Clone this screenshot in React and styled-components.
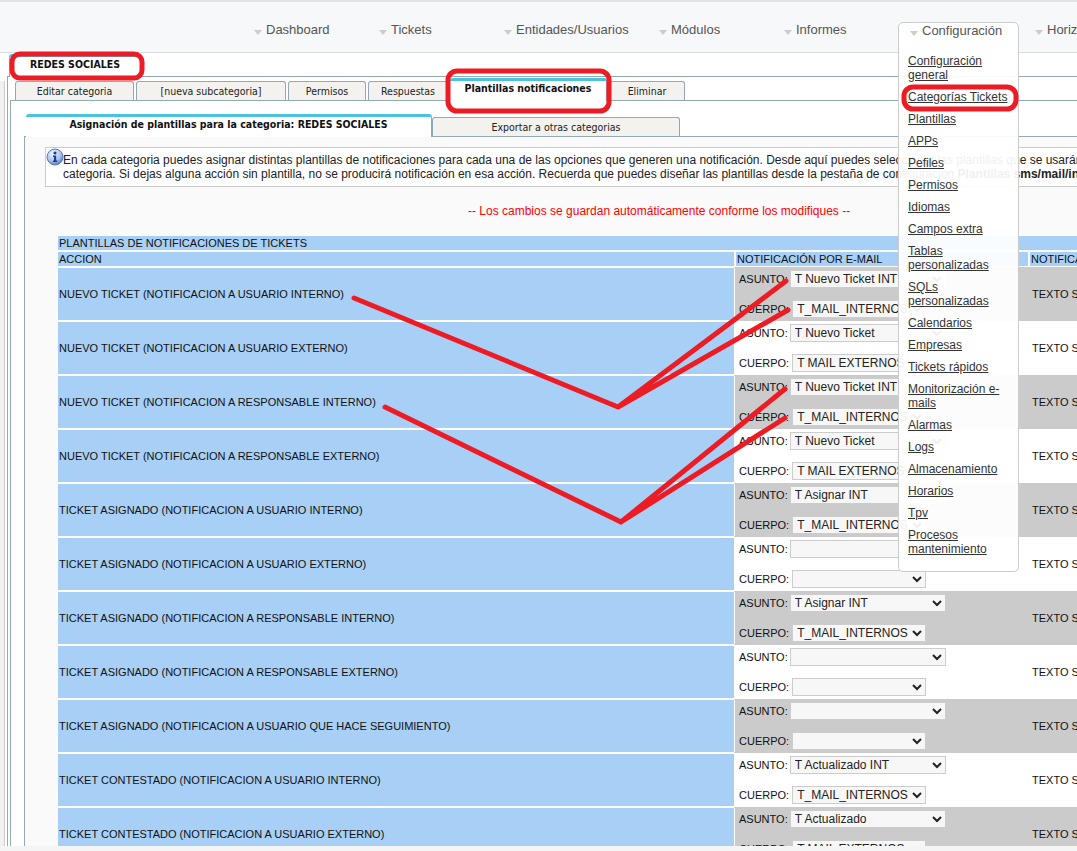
import React from "react"
import styled, { createGlobalStyle } from "styled-components"

const GlobalStyle = createGlobalStyle`
  html, body {
    margin: 0;
    overflow: hidden;
    background: #fff;
  }
  * {
    box-sizing: border-box;
  }
`

const Page = styled.div`
  position: relative;
  display: flex;
  flex-direction: column;
  width: 1077px;
  height: 851px;
  overflow: hidden;
  font-family: "Liberation Sans", Arial, sans-serif;
  font-size: 12px;
  color: #222;
  background: #fff;
`

const TopBar = styled.div`
  position: relative;
  z-index: 2;
  display: flex;
  flex: none;
  height: 53px;
  padding: 20px 0 0 254px;
  background: #f7f8fa;
  border-top: 2px solid #e2e2e2;
  border-bottom: 1px solid #dcdcdc;
`

const NavItem = styled.div`
  position: relative;
  flex: none;
  width: ${(p) => p.$width}px;
  font-size: 13px;
  line-height: 15px;
  color: #555;
  white-space: nowrap;
`

const Caret = styled.span`
  display: inline-block;
  width: 0;
  height: 0;
  margin-right: 4px;
  border-left: 4px solid transparent;
  border-right: 4px solid transparent;
  border-top: 5px solid #ccc;
  vertical-align: -1px;
`

const Dropdown = styled.div`
  position: absolute;
  top: 0;
  left: -12px;
  width: 121px;
  height: 550px;
  padding: 0 0 0 11px;
  background: rgba(255, 255, 255, 0.93);
  border: 1px solid #ccc;
  border-radius: 5px;
`

const MenuList = styled.div`
  display: flex;
  flex-direction: column;
  gap: 8px;
  width: 100px;
  margin: 16px 0 0 -2px;
  white-space: normal;
`

const MenuLink = styled.a`
  font-size: 12px;
  line-height: 14px;
  color: #333;
  text-decoration: underline;
`

const Body = styled.div`
  display: flex;
  flex: 1;
  min-height: 0;
  overflow: hidden;
`

const SideStrip = styled.div`
  flex: none;
  width: 5px;
  margin: 28px 2px 0 0;
  background: #f1f1f1;
  border-right: 1px solid #ccc;
`

const Main = styled.div`
  flex: none;
  width: 1400px;
`

const TabRow = styled.div`
  display: flex;
  align-items: flex-end;
  gap: ${(p) => p.$gap || 0}px;
  margin-left: ${(p) => p.$left}px;
  padding-top: ${(p) => p.$top || 0}px;
`

const tabFont = `
  font-family: "DejaVu Sans Condensed", "DejaVu Sans", sans-serif;
  font-stretch: condensed;
  font-size: 10.5px;
`

const Tab = styled.div`
  flex: none;
  width: ${(p) => p.$width}px;
  height: 19px;
  ${tabFont}
  line-height: 19px;
  text-align: center;
  color: #222;
  white-space: nowrap;
  background: #f3f2ee;
  border: 1px solid #94a9b8;
  border-bottom: 0;
  border-radius: 3px 3px 0 0;
`

const ActiveTab = styled.div`
  position: relative;
  z-index: 1;
  flex: none;
  width: ${(p) => p.$width}px;
  height: ${(p) => p.$height}px;
  margin-bottom: -1px;
  ${tabFont}
  font-weight: 700;
  line-height: 14px;
  text-align: center;
  color: #111;
  white-space: nowrap;
  background: #fff;
  border-top: 3px solid #4bc3de;
  border-right: 1px solid #94a9b8;
  border-left: ${(p) => (p.$edge ? "1px solid #94a9b8" : "0")};
  border-radius: 3px 3px 0 0;
`

const Panel = styled.div`
  margin-left: ${(p) => p.$left || 0}px;
  padding-left: ${(p) => p.$pad || 0}px;
  min-height: 900px;
  border-top: 1px solid #94a9b8;
  border-left: 1px solid #94a9b8;
  background: ${(p) => p.$bg || "#fff"};
`

const InfoBox = styled.div`
  position: relative;
  width: 1300px;
  height: 40px;
  margin: 10px 0 0 20px;
  padding: 5px 0 0 17px;
  font-size: 12px;
  line-height: 14px;
  color: #222;
  background: #fff;
  border: 1px solid #ccc;
`

const InfoIcon = styled.svg`
  position: absolute;
  top: 0;
  left: 0;
`

const InfoLine = styled.div`
  white-space: nowrap;
`

const Notice = styled.div`
  width: 1272px;
  margin: 17px 0 18px 0;
  padding-left: 443px;
  font-size: 12px;
  line-height: 14px;
  color: #ff0000;
`

const Table = styled.div`
  width: 1300px;
  margin-left: 33px;
  font-size: 11px;
  line-height: 14px;
`

const HeadRow = styled.div`
  display: flex;
  gap: 2px;
  margin-bottom: 2px;
`

const HeadCell = styled.div`
  flex: ${(p) => (p.$width ? "none" : 1)};
  width: ${(p) => (p.$width ? `${p.$width}px` : "auto")};
  height: 14px;
  padding-left: 1px;
  color: #111;
  white-space: nowrap;
  background: #a8cff5;
`

const Row = styled.div`
  display: flex;
  height: 54px;
  margin-top: ${(p) => (p.$first ? "-1px" : 0)};
  background: ${(p) => (p.$shaded ? "#cbcbcb" : "#fff")};
`

const ActionCell = styled.div`
  display: flex;
  align-items: center;
  flex: none;
  width: 676px;
  height: 52px;
  margin: 1px 1px 1px 0;
  padding-left: 1px;
  color: #111;
  background: #a8cff5;
  box-shadow: 0 -1px 0 #fff, 0 1px 0 #fff, 1px 0 0 #fff;
`

const MailCell = styled.div`
  display: flex;
  flex-direction: column;
  gap: 12px;
  flex: none;
  width: 295px;
  padding: 3px 0 0 4px;
`

const Field = styled.label`
  display: flex;
  align-items: center;
  height: 18px;
  color: #111;
  white-space: nowrap;
`

const FieldName = styled.span`
  margin-right: ${(p) => p.$gap}px;
`

const TemplateSelect = styled.select`
  width: ${(p) => p.$width}px;
  height: 18px;
  padding: 0;
  font-family: "Liberation Sans", Arial, sans-serif;
  font-size: 12px;
  color: #222;
  background: #f7f7f7;
  border: 1px solid #ccc;
  border-radius: 0;
`

const SmsCell = styled.div`
  display: flex;
  align-items: center;
  flex: 1;
  padding-left: 2px;
  color: #111;
  white-space: nowrap;
`

const ScrollStrip = styled.div`
  flex: none;
  height: 5px;
  background: #f5f5f5;
`

const Marks = styled.svg`
  position: absolute;
  top: 0;
  left: 0;
  z-index: 3;
  pointer-events: none;
`

const navItems = [
  { label: "Dashboard", width: 125 },
  { label: "Tickets", width: 125 },
  { label: "Entidades/Usuarios", width: 155 },
  { label: "Módulos", width: 125 },
  { label: "Informes", width: 126 },
]

const menuItems = [
  "Configuración general",
  "Categorías Tickets",
  "Plantillas",
  "APPs",
  "Pefiles",
  "Permisos",
  "Idiomas",
  "Campos extra",
  "Tablas personalizadas",
  "SQLs personalizadas",
  "Calendarios",
  "Empresas",
  "Tickets rápidos",
  "Monitorización e-mails",
  "Alarmas",
  "Logs",
  "Almacenamiento",
  "Horarios",
  "Tpv",
  "Procesos mantenimiento",
]

const rows = [
  ["NUEVO TICKET (NOTIFICACION A USUARIO INTERNO)", "T Nuevo Ticket INT", "T_MAIL_INTERNOS"],
  ["NUEVO TICKET (NOTIFICACION A USUARIO EXTERNO)", "T Nuevo Ticket", "T MAIL EXTERNOS"],
  ["NUEVO TICKET (NOTIFICACION A RESPONSABLE INTERNO)", "T Nuevo Ticket INT", "T_MAIL_INTERNOS"],
  ["NUEVO TICKET (NOTIFICACION A RESPONSABLE EXTERNO)", "T Nuevo Ticket", "T MAIL EXTERNOS"],
  ["TICKET ASIGNADO (NOTIFICACION A USUARIO INTERNO)", "T Asignar INT", "T_MAIL_INTERNOS"],
  ["TICKET ASIGNADO (NOTIFICACION A USUARIO EXTERNO)", "", ""],
  ["TICKET ASIGNADO (NOTIFICACION A RESPONSABLE INTERNO)", "T Asignar INT", "T_MAIL_INTERNOS"],
  ["TICKET ASIGNADO (NOTIFICACION A RESPONSABLE EXTERNO)", "", ""],
  ["TICKET ASIGNADO (NOTIFICACION A USUARIO QUE HACE SEGUIMIENTO)", "", ""],
  ["TICKET CONTESTADO (NOTIFICACION A USUARIO INTERNO)", "T Actualizado INT", "T_MAIL_INTERNOS"],
  ["TICKET CONTESTADO (NOTIFICACION A USUARIO EXTERNO)", "T Actualizado", "T MAIL EXTERNOS"],
]

const Select = ({ value, width }) => (
  <TemplateSelect $width={width} defaultValue={value}>
    <option value={value}>{value}</option>
  </TemplateSelect>
)

const Annotations = () => (
  <Marks width="1077" height="851" fill="none" stroke="#ed1c24" strokeWidth="5" strokeLinecap="round" strokeLinejoin="round">
    <rect x="12" y="54" width="130" height="24" rx="8" />
    <rect x="448" y="71" width="161" height="40" rx="9" />
    <rect x="904" y="87" width="112" height="22" rx="9" />
    <path d="M354 298 L618 407 L786 281 M618 407 L788 310" />
    <path d="M385 407 L621 522 L785 389 M621 522 L785 418" />
  </Marks>
)

export default function App() {
  return (
    <Page>
      <GlobalStyle />
      <TopBar>
        {navItems.map((item) => (
          <NavItem key={item.label} $width={item.width}>
            <Caret />
            {item.label}
          </NavItem>
        ))}
        <NavItem $width={125}>
          <Dropdown>
            <Caret />
            Configuración
            <MenuList>
              {menuItems.map((item) => (
                <MenuLink key={item}>{item}</MenuLink>
              ))}
            </MenuList>
          </Dropdown>
        </NavItem>
        <NavItem $width={80}>
          <Caret />
          Horizontal
        </NavItem>
      </TopBar>
      <Body>
        <SideStrip />
        <Main>
          <TabRow $left={2} $top={1}>
            <ActiveTab $width={132} $height={23} $edge>REDES SOCIALES</ActiveTab>
          </TabRow>
          <Panel $pad={2}>
            <TabRow $left={5} $top={1} $gap={2}>
              <Tab $width={119}>Editar categoria</Tab>
              <Tab $width={150}>[nueva subcategoria]</Tab>
              <Tab $width={78}>Permisos</Tab>
              <Tab $width={80}>Respuestas</Tab>
              <ActiveTab $width={157} $height={23}>Plantillas notificaciones</ActiveTab>
              <Tab $width={76}>Eliminar</Tab>
            </TabRow>
            <Panel $pad={13}>
              <TabRow $left={2} $top={13}>
                <ActiveTab $width={406} $height={23}>Asignación de plantillas para la categoria: REDES SOCIALES</ActiveTab>
                <Tab $width={248}>Exportar a otras categorias</Tab>
              </TabRow>
              <Panel $bg="#fafafa">
                <InfoBox>
                  <InfoIcon width="18" height="18" viewBox="0 0 18 18">
                    <defs>
                      <radialGradient id="infoFill" cx="40%" cy="30%" r="75%">
                        <stop offset="0%" stopColor="#f4f8ff" />
                        <stop offset="60%" stopColor="#a9c3ea" />
                        <stop offset="100%" stopColor="#4a6fb5" />
                      </radialGradient>
                    </defs>
                    <circle cx="9" cy="9" r="8" fill="url(#infoFill)" stroke="#5b7dbd" />
                    <circle cx="9" cy="5" r="1.6" fill="#1d3f8f" />
                    <path d="M7 7.6 H10.2 V12.6 H11.2 V14 H7 V12.6 H8 V8.9 H7 Z" fill="#1d3f8f" />
                  </InfoIcon>
                  <InfoLine>
                    En cada categoria puedes asignar distintas plantillas de notificaciones para cada una de las opciones que generen una notificación. Desde aquí puedes seleccionar las plantillas que se usarán en cada caso
                  </InfoLine>
                  <InfoLine>
                    categoria. Si dejas alguna acción sin plantilla, no se producirá notificación en esa acción. Recuerda que puedes diseñar las plantillas desde la pestaña de configuración <b>Plantillas sms/mail/internos</b>
                  </InfoLine>
                </InfoBox>
                <Notice>-- Los cambios se guardan automáticamente conforme los modifiques --</Notice>
                <Table>
                  <HeadRow>
                    <HeadCell>PLANTILLAS DE NOTIFICACIONES DE TICKETS</HeadCell>
                  </HeadRow>
                  <HeadRow>
                    <HeadCell $width={676}>ACCION</HeadCell>
                    <HeadCell $width={292}>NOTIFICACIÓN POR E-MAIL</HeadCell>
                    <HeadCell>NOTIFICACIÓN POR SMS</HeadCell>
                  </HeadRow>
                  {rows.map(([action, subject, body], index) => (
                    <Row key={action} $shaded={index % 2 === 0} $first={index === 0}>
                      <ActionCell>{action}</ActionCell>
                      <MailCell>
                        <Field>
                          <FieldName $gap={2}>ASUNTO:</FieldName>
                          <Select value={subject} width={156} />
                        </Field>
                        <Field>
                          <FieldName $gap={3}>CUERPO:</FieldName>
                          <Select value={body} width={134} />
                        </Field>
                      </MailCell>
                      <SmsCell>TEXTO SMS:</SmsCell>
                    </Row>
                  ))}
                </Table>
              </Panel>
            </Panel>
          </Panel>
        </Main>
      </Body>
      <ScrollStrip />
      <Annotations />
    </Page>
  )
}
